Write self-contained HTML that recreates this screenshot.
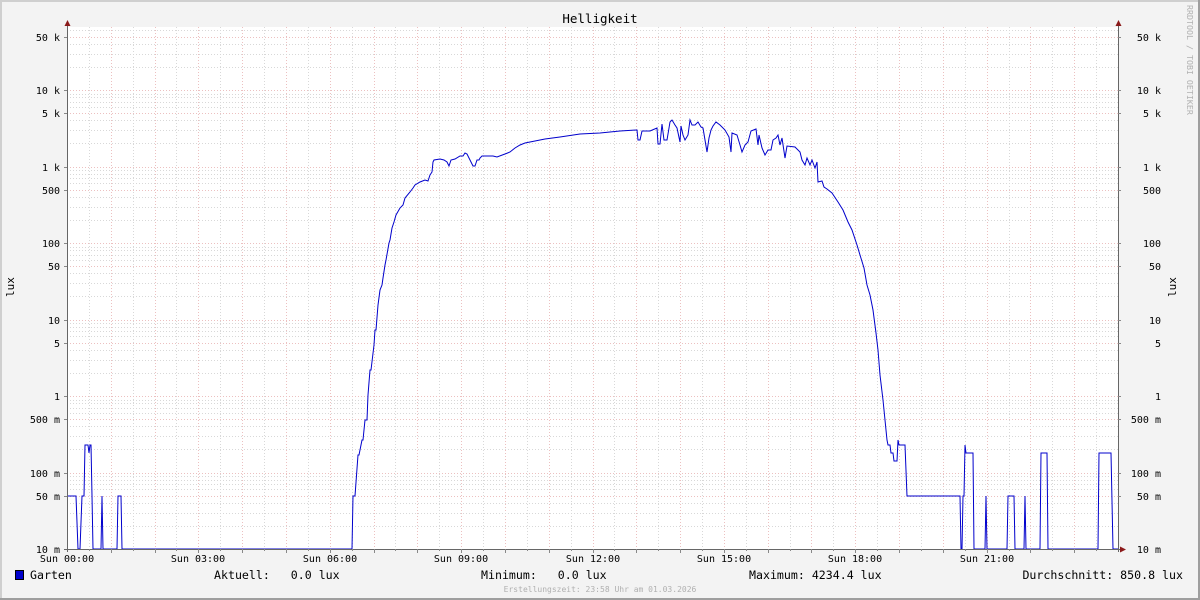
<!DOCTYPE html>
<html><head><meta charset="utf-8"><style>
html,body{margin:0;padding:0;background:#f3f3f3;}
svg{display:block;font-family:"DejaVu Sans Mono","Liberation Mono",monospace;}
.pre{white-space:pre;}
</style></head><body>
<svg id="g" width="1200" height="600" xmlns="http://www.w3.org/2000/svg">
<rect x="0" y="0" width="1200" height="600" fill="#f3f3f3"/>
<rect x="0" y="0" width="1200" height="2" fill="#cfcfcf"/>
<rect x="0" y="0" width="2" height="600" fill="#cfcfcf"/>
<rect x="0" y="598" width="1200" height="2" fill="#9e9e9e"/>
<rect x="1198" y="0" width="2" height="600" fill="#9e9e9e"/>
<rect x="67" y="27" width="1051" height="522" fill="#ffffff"/>
<g id="grid" stroke-width="1" shape-rendering="crispEdges" stroke-dasharray="1 2"></g>
<polyline fill="none" stroke="#0000cc" stroke-width="1" points="67,496 76,496 78,549 80,549 82,496 84,496 85,445 88,445 89,453 90,445 91,445 92,496 93,549 101,549 102,496 103,549 117,549 118,496 121,496 122,549 352,549 353,496 355,496 358,455 359,455 362,440 363,440 365,420 367,420 368,395 370,370 371,370 374,345 375,330 376,330 378,305 380,290 382,285 383,278 385,265 386,260 389,243 390,240 392,228 394,222 396,215 400,208 403,205 405,198 410,192 413,188 415,185 420,182 425,180 428,181 430,175 432,172 433,162 434,160 440,159 444,160 447,162 448,164 449,166 451,160 455,159 460,156 463,156 465,153 467,154 470,160 471,162 473,166 475,166 477,160 479,160 480,158 482,156 493,156 497,157 505,154 510,152 515,148 520,145 525,143 535,141 545,139 560,137 580,134 600,133 620,131 637,130 638,140 640,140 642,131 650,131 657,128 658,144 660,144 662,124 664,140 667,140 670,122 672,120 675,125 677,128 680,142 681,126 683,135 685,140 688,135 690,120 692,125 695,125 698,122 701,127 703,128 707,152 709,138 711,130 713,126 716,122 720,125 725,130 729,137 731,152 732,133 737,135 740,145 742,152 745,145 748,142 751,131 756,129 758,145 759,135 762,148 765,155 768,150 771,150 773,140 776,138 778,135 780,145 782,138 785,158 787,146 795,147 800,152 802,160 805,165 807,158 810,165 812,160 815,168 817,162 818,182 822,181 824,187 827,189 832,193 838,202 843,210 848,222 852,230 857,245 860,255 864,268 867,285 870,295 873,310 876,333 878,350 880,375 883,400 885,420 887,440 888,445 890,445 891,453 893,453 894,461 897,461 898,440 899,445 905,445 907,496 960,496 961,549 962,549 963,496 964,496 965,445 966,453 973,453 974,549 985,549 986,496 987,549 1007,549 1008,496 1014,496 1015,549 1024,549 1025,496 1026,549 1040,549 1041,453 1047,453 1048,549 1098,549 1099,453 1111,453 1113,549 1118,549"/>
<g stroke="#666" stroke-width="1" shape-rendering="crispEdges">
<line x1="67.5" y1="24" x2="67.5" y2="552"/>
<line x1="1118.5" y1="24" x2="1118.5" y2="552"/>
<line x1="64" y1="549.5" x2="1122" y2="549.5"/>
</g>
<g id="ticks" stroke="#888" stroke-width="1" shape-rendering="crispEdges"></g>
<polygon points="64.5,26 70.5,26 67.5,20" fill="#8b1a1a"/>
<polygon points="1115.5,26 1121.5,26 1118.5,20" fill="#8b1a1a"/>
<polygon points="1120,546.5 1120,552.5 1126,549.5" fill="#8b1a1a"/>
<text x="600" y="23" font-size="12.5" text-anchor="middle" fill="#000">Helligkeit</text>
<g font-size="10" fill="#000" text-anchor="end">
<text x="60" y="41">50 k</text><text x="60" y="94">10 k</text><text x="60" y="117">5 k</text>
<text x="60" y="171">1 k</text><text x="60" y="194">500</text><text x="60" y="247">100</text>
<text x="60" y="270">50</text><text x="60" y="324">10</text><text x="60" y="347">5</text>
<text x="60" y="400">1</text><text x="60" y="423">500 m</text><text x="60" y="477">100 m</text>
<text x="60" y="500">50 m</text><text x="60" y="553">10 m</text>
</g>
<g font-size="10" fill="#000" text-anchor="end">
<text x="1161" y="41">50 k</text><text x="1161" y="94">10 k</text><text x="1161" y="117">5 k</text>
<text x="1161" y="171">1 k</text><text x="1161" y="194">500</text><text x="1161" y="247">100</text>
<text x="1161" y="270">50</text><text x="1161" y="324">10</text><text x="1161" y="347">5</text>
<text x="1161" y="400">1</text><text x="1161" y="423">500 m</text><text x="1161" y="477">100 m</text>
<text x="1161" y="500">50 m</text><text x="1161" y="553">10 m</text>
</g>
<g font-size="10" fill="#000" text-anchor="middle">
<text x="67" y="562">Sun 00:00</text><text x="198" y="562">Sun 03:00</text>
<text x="330" y="562">Sun 06:00</text><text x="461" y="562">Sun 09:00</text>
<text x="593" y="562">Sun 12:00</text><text x="724" y="562">Sun 15:00</text>
<text x="855" y="562">Sun 18:00</text><text x="987" y="562">Sun 21:00</text>
</g>
<text transform="translate(14,287) rotate(-90)" font-size="11" text-anchor="middle" fill="#000">lux</text>
<text transform="translate(1176,287) rotate(-90)" font-size="11" text-anchor="middle" fill="#000">lux</text>
<text transform="translate(1187,5) rotate(90)" font-size="8.3" fill="#b0b0b0">RRDTOOL / TOBI OETIKER</text>
<rect x="15.5" y="570.5" width="8" height="9" fill="#0000cc" stroke="#000"/>
<g font-size="11.6" fill="#000" class="pre">
<text x="30" y="579">Garten</text>
<text x="214" y="579" class="pre">Aktuell:   0.0 lux</text>
<text x="481" y="579" class="pre">Minimum:   0.0 lux</text>
<text x="749" y="579" class="pre">Maximum: 4234.4 lux</text>
<text x="1183" y="579" text-anchor="end" class="pre">Durchschnitt: 850.8 lux</text>
</g>
<text x="600" y="592" font-size="8" text-anchor="middle" fill="#b0b0b0">Erstellungszeit: 23:58 Uhr am 01.03.2026</text>
</svg>
<script>
(function(){
var ns="http://www.w3.org/2000/svg",g=document.getElementById("grid"),t=document.getElementById("ticks");
function L(p,x1,y1,x2,y2,c){var l=document.createElementNS(ns,"line");l.setAttribute("x1",x1);l.setAttribute("y1",y1);l.setAttribute("x2",x2);l.setAttribute("y2",y2);l.setAttribute("stroke",c);p.appendChild(l);}
var step=1051/48;
for(var i=1;i<48;i++){var x=Math.round(67+i*step)+0.5;var maj=i%2==0;L(g,x,27,x,549,maj?"#ecc0c0":"#d8d8d8");L(t,x,549,x,maj?553:551,"#888");}
var bases=[549,472.5,396,319.5,243,166.5,90,13.5];
for(var d=0;d<7;d++){for(var k=1;k<=9;k++){var y=bases[d]-76.5*Math.log10(k);if(y<27)continue;y=Math.round(y)+0.5;if(k==1&&d==0)continue;var maj=(k==1||k==5);L(g,67,y,1118,y,maj?"#ecc0c0":"#d8d8d8");if(maj){L(t,64,y,67,y,"#888");L(t,1118,y,1121,y,"#888");}}}
})();
</script>
</body></html>
